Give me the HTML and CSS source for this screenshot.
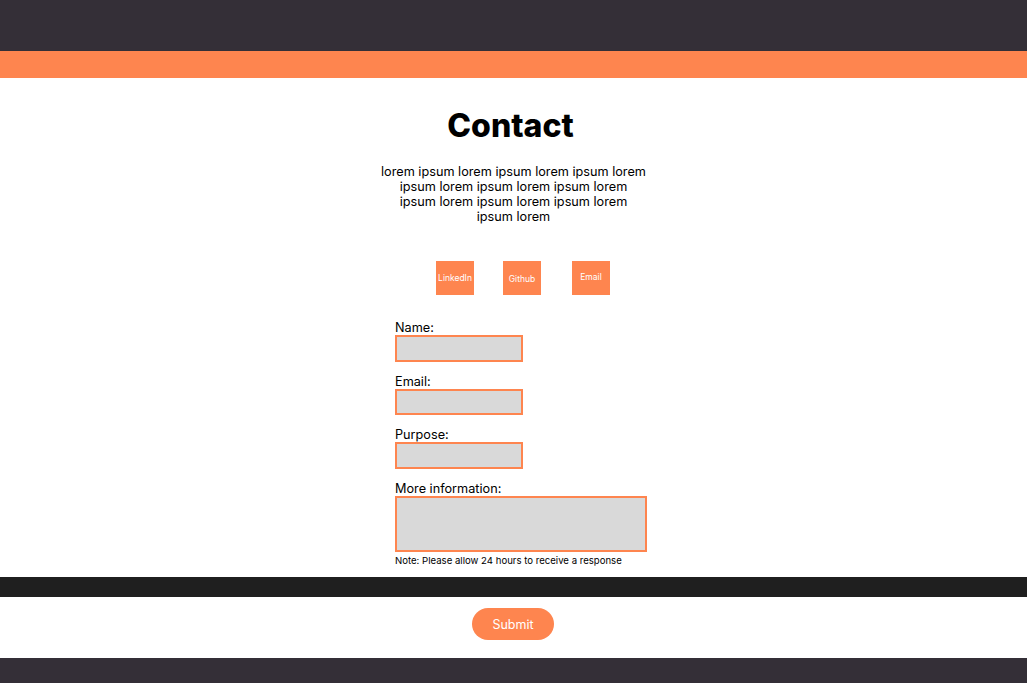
FILE: index.html
```html
<!DOCTYPE html>
<html lang="en">
<head>
<meta charset="utf-8">
<title>Contact</title>
<link rel="stylesheet" href="styles.css">
</head>
<body>
<header class="topbar"></header>
<nav class="navbar"></nav>
<main class="main">
  <h1 class="title">Contact</h1>
  <p class="intro">lorem ipsum lorem ipsum lorem ipsum lorem<br>ipsum lorem ipsum lorem ipsum lorem<br>ipsum lorem ipsum lorem ipsum lorem<br>ipsum lorem</p>
  <div class="links">
    <a class="link-btn" href="#">LinkedIn</a>
    <a class="link-btn link-github" href="#">Github</a>
    <a class="link-btn link-email" href="#">Email</a>
  </div>
  <form class="form">
    <label class="field-label" for="name">Name:</label>
    <input class="field" id="name" type="text">
    <label class="field-label" for="email">Email:</label>
    <input class="field" id="email" type="text">
    <label class="field-label" for="purpose">Purpose:</label>
    <input class="field" id="purpose" type="text">
    <label class="field-label" for="info">More information:</label>
    <textarea class="field field-area" id="info"></textarea>
    <p class="note">Note: Please allow 24 hours to receive a response</p>
  </form>
</main>
<div class="divider"></div>
<section class="submit-row">
  <button class="submit" type="button">Submit</button>
</section>
<footer class="footer"></footer>
</body>
</html>
```
FILE: styles.css
```css
* { box-sizing: border-box; }
html, body { margin: 0; padding: 0; }
body {
  font-family: Inter, "Noto Sans", sans-serif;
  color: #000;
  background: #fff;
}
.topbar { height: 51px; background: #342f37; }
.navbar { height: 27px; background: #fe854f; }
.main {
  height: 499px;
  padding-top: 30px;
  display: flex;
  flex-direction: column;
  align-items: center;
}
.title {
  margin: 0;
  font-size: 32px;
  font-weight: 800;
  line-height: 36px;
  margin-left: -6px;
}
.intro {
  margin: 20px 0 0;
  width: 300px;
  text-align: center;
  font-size: 12.7px;
  line-height: 15px;
}
.links {
  margin-top: 37px;
  display: flex;
  gap: 29px;
  margin-left: 19px;
}
.link-btn {
  width: 38px;
  height: 34px;
  background: #fe854f;
  color: #fff;
  font-size: 8.5px;
  text-decoration: none;
  display: flex;
  align-items: center;
  justify-content: center;
  padding-bottom: 1px;
}
.link-github { padding-bottom: 0; padding-top: 1px; }
.link-email { margin-left: 2px; padding-bottom: 3px; }
.form {
  margin-top: 25px;
  width: 252px;
  align-self: flex-start;
  margin-left: calc(50% - 118.5px);
  display: flex;
  flex-direction: column;
  align-items: flex-start;
}
.field-label {
  font-size: 12.7px;
  line-height: 15px;
}
.field {
  display: block;
  width: 128px;
  height: 26.5px;
  margin: 0 0 12px;
  background: #d9d9d9;
  border: 2px solid #fe854f;
  border-radius: 0;
  padding: 0;
  font: inherit;
}
.field-area {
  width: 252px;
  height: 56.5px;
  margin-bottom: 2px;
  resize: none;
}
.note {
  margin: 0;
  font-size: 9.6px;
  line-height: 14px;
}
.divider { height: 20px; background: #1f1f1f; }
.submit-row {
  height: 61px;
  display: flex;
  justify-content: center;
  padding-top: 11px;
}
.submit {
  width: 82px;
  height: 32px;
  border: none;
  border-radius: 16px;
  background: #fe854f;
  color: #fff;
  font-family: Inter, "Noto Sans", sans-serif;
  font-size: 12.5px;
  margin-left: -1px;
}
.footer { height: 25px; background: #342f37; }
```
